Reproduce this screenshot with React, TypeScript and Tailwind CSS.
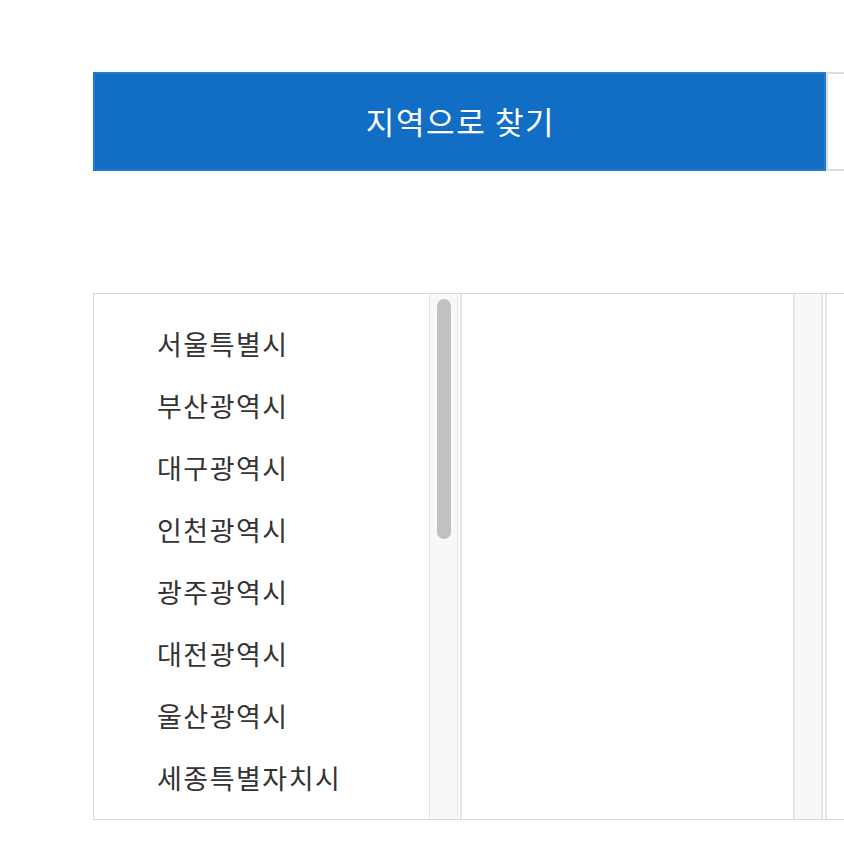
import React from "react";

const regions = [
  "서울특별시",
  "부산광역시",
  "대구광역시",
  "인천광역시",
  "광주광역시",
  "대전광역시",
  "울산광역시",
  "세종특별자치시",
];

export default function App() {
  return (
    <div
      className="w-[844px] h-[858px] overflow-hidden bg-white pl-[93px] pt-[72px]"
      style={{ fontFamily: '"Noto Sans CJK KR", "Noto Sans", sans-serif' }}
    >
      <div className="flex w-[900px] h-[99px]">
        <div className="w-[733px] h-full flex items-center justify-center bg-[#116ec4] border-2 border-[#1f7bd0] text-white text-[31px] leading-none tracking-[1.6px] pl-[2px] pb-[3px]">
          지역으로 찾기
        </div>
        <div className="flex-1 h-full border-2 border-r-0 border-[#dcdcdc]" />
      </div>

      <div className="mt-[122px] w-[900px] h-[527px] border border-r-0 border-[#d9d9d9] flex">
        {/* column 1 */}
        <div className="w-[366px] h-full flex">
          <ul className="flex-1 pt-[18px] pl-[63px] text-[27px] text-[#333333] tracking-[1.5px]">
            {regions.map((r) => (
              <li key={r} className="h-[62px] flex items-center leading-none">
                {r}
              </li>
            ))}
          </ul>
          <div className="w-[29px] h-full bg-[#f8f8f8] border-l border-r border-[#e6e6e6] pl-[7px] pt-[5px]">
            <div className="w-[14px] h-[240px] rounded-full bg-[#c1c1c1]" />
          </div>
          <div className="w-[2px]" />
        </div>
        {/* column 2 */}
        <div className="w-[365px] h-full flex border-l-2 border-[#e6e6e6]">
          <div className="flex-1" />
          <div className="w-[30px] h-full bg-[#f8f8f8] border-l-2 border-r-2 border-[#e6e6e6]" />
          <div className="w-[2px]" />
        </div>
        {/* column 3 */}
        <div className="flex-1 h-full border-l-2 border-[#e6e6e6]" />
      </div>
    </div>
  );
}
